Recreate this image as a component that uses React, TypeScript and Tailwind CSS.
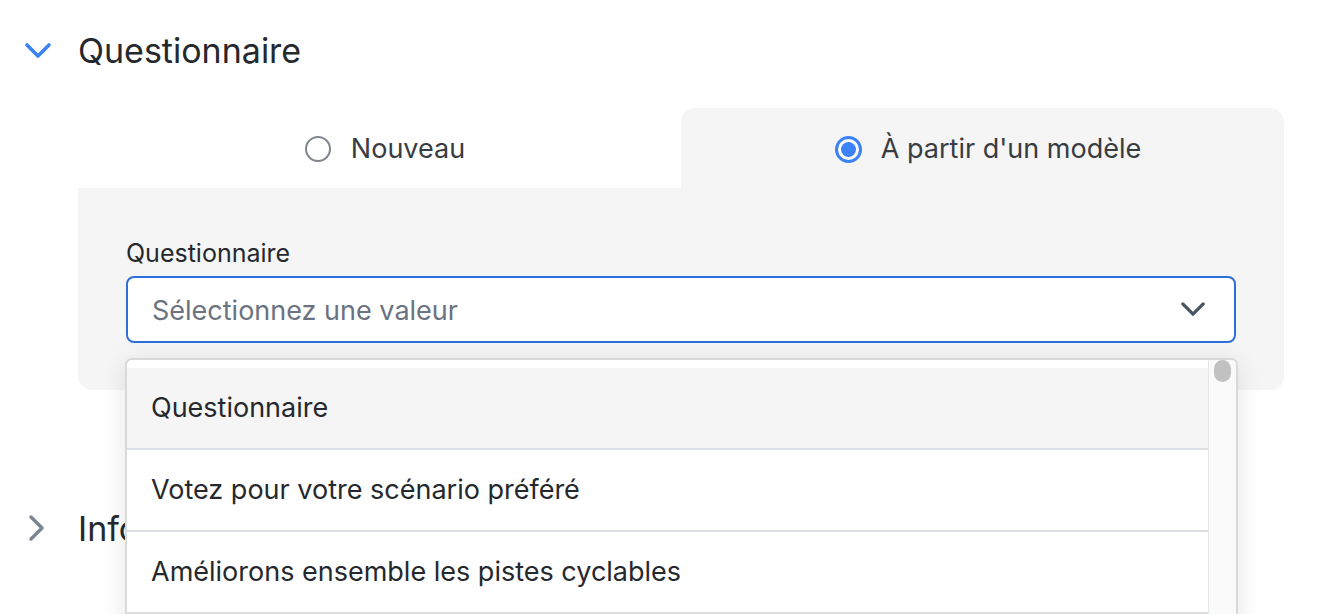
import React from "react";

const font = { fontFamily: "Inter, 'Noto Sans', sans-serif" };

function ChevronDown({ className }: { className?: string }) {
  return (
    <svg viewBox="0 0 28 18" className={className} fill="none">
      <path d="M3 3 L14 14 L25 3" stroke="currentColor" strokeWidth="3.6" strokeLinecap="round" strokeLinejoin="round" />
    </svg>
  );
}

function ChevronRight({ className }: { className?: string }) {
  return (
    <svg viewBox="0 0 18 28" className={className} fill="none">
      <path d="M3 3 L14 14 L3 25" stroke="currentColor" strokeWidth="3.4" strokeLinecap="round" strokeLinejoin="round" />
    </svg>
  );
}

const items = [
  "Questionnaire",
  "Votez pour votre scénario préféré",
  "Améliorons ensemble les pistes cyclables",
];

export default function App() {
  return (
    <div className="w-[1342px] h-[614px] overflow-hidden bg-white relative text-[#25282d]" style={font}>
      <div className="pt-[30px]">
        {/* Header */}
        <div className="flex items-center h-[42px]">
          <div className="w-[78px] pl-[24px] flex items-center">
            <ChevronDown className="w-[28px] h-[18px] text-[#3b82f6]" />
          </div>
          <span className="text-[34px] leading-[42px] text-[#25282d]">Questionnaire</span>
        </div>

        {/* Tabs + panel */}
        <div className="ml-[78px] w-[1206px] mt-[36px] relative">
          <div className="flex h-[80px]">
            <div className="flex-1 flex items-center justify-center gap-[20px] pl-[11px] pt-[2px]">
              <span className="w-[26px] h-[26px] rounded-full border-2 border-[#80868e] bg-white" />
              <span className="text-[27px] text-[#383c43]">Nouveau</span>
            </div>
            <div className="flex-1 flex items-center justify-center gap-[19px] pl-[11px] pt-[2px] bg-[#f5f5f5] rounded-t-[14px]">
              <span className="w-[27px] h-[27px] rounded-full border-[3px] border-[#3b82f6] bg-white flex items-center justify-center">
                <span className="w-[15px] h-[15px] rounded-full bg-[#3b82f6]" />
              </span>
              <span className="text-[27px] text-[#383c43]">À partir d'un modèle</span>
            </div>
          </div>
          <div className="bg-[#f5f5f5] rounded-b-[14px] h-[202px] px-[48px] pt-[50px]">
            <div className="text-[25px] leading-[30px] text-[#25282d]">Questionnaire</div>
            <div className="mt-[8px] h-[67px] border-2 border-[#2f6fdb] rounded-[8px] bg-white flex items-center justify-between pl-[24px] pr-[28px]">
              <span className="text-[27px] text-[#6b7280] pt-[4px]">Sélectionnez une valeur</span>
              <ChevronDown className="w-[26px] h-[17px] text-[#4b5563]" />
            </div>
          </div>
        </div>

        {/* Info row */}
        <div className="flex items-center h-[42px] mt-[117px]">
          <div className="w-[78px] pl-[28px] flex items-center">
            <ChevronRight className="w-[18px] h-[28px] text-[#7b8592]" />
          </div>
          <span className="text-[34px] leading-[42px] text-[#25282d] pt-[1px]">Informations</span>
        </div>
      </div>

      {/* Dropdown menu overlay */}
      <div className="absolute left-[125px] top-[358px] w-[1113px] h-[280px] bg-white border-2 border-[#d9d9d9] rounded-t-[7px] shadow-[0_4px_24px_rgba(0,0,0,0.10)] flex overflow-hidden">
        <div className="flex-1 pt-[8px]">
          {items.map((t, i) => (
            <div
              key={t}
              className={`h-[82px] border-b-2 border-[#dcdfe3] flex items-center pl-[24px] pt-[1px] ${i === 0 ? "bg-[#f5f5f5]" : "bg-white"}`}
            >
              <span className="text-[27px] text-[#25282d]">{t}</span>
            </div>
          ))}
        </div>
        <div className="w-[28px] bg-[#fafafa] border-l border-[#e6e6e6] flex justify-center">
          <div className="w-[17px] h-[22px] rounded-full bg-[#c1c1c1]" />
        </div>
      </div>
    </div>
  );
}
